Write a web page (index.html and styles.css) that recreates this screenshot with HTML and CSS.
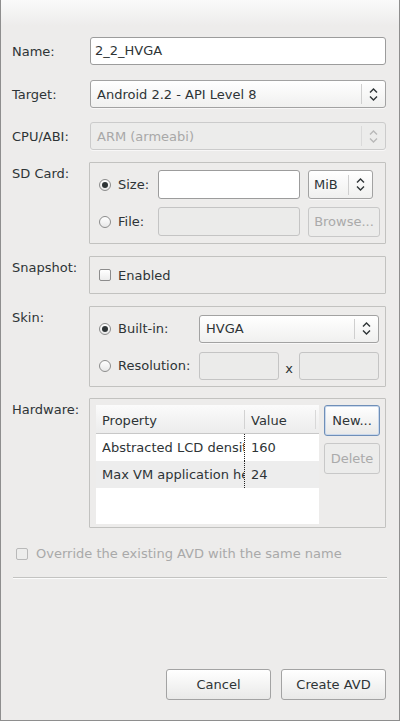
FILE: index.html
```html
<!DOCTYPE html>
<html>
<head>
<meta charset="utf-8">
<link rel="stylesheet" href="styles.css">
</head>
<body>
<div class="window">
  <div class="row field">
    <div class="lbl">Name:</div>
    <div class="input wide">2_2_HVGA</div>
  </div>
  <div class="row field r-target">
    <div class="lbl">Target:</div>
    <div class="select wide">
      <span class="sel-text">Android 2.2 - API Level 8</span>
      <span class="arrow"><svg width="9" height="15" viewBox="0 0 9 15"><path d="M1 5.5 L4.5 2 L8 5.5 M1 9.5 L4.5 13 L8 9.5" fill="none" stroke="#2e3436" stroke-width="1.4"/></svg></span>
    </div>
  </div>
  <div class="row field r-cpu">
    <div class="lbl">CPU/ABI:</div>
    <div class="select wide disabled">
      <span class="sel-text">ARM (armeabi)</span>
      <span class="arrow"><svg width="9" height="15" viewBox="0 0 9 15"><path d="M1 5.5 L4.5 2 L8 5.5 M1 9.5 L4.5 13 L8 9.5" fill="none" stroke="#b8b8b8" stroke-width="1.4"/></svg></span>
    </div>
  </div>
  <div class="row grouprow r-sd">
    <div class="lbl">SD Card:</div>
    <div class="group sd">
      <div class="grow">
        <div class="opt w-sd"><span class="radio checked"></span><span>Size:</span></div>
        <div class="input size"></div>
        <div class="select mib">
          <span class="sel-text">MiB</span>
          <span class="arrow"><svg width="9" height="15" viewBox="0 0 9 15"><path d="M1 5.5 L4.5 2 L8 5.5 M1 9.5 L4.5 13 L8 9.5" fill="none" stroke="#2e3436" stroke-width="1.4"/></svg></span>
        </div>
      </div>
      <div class="grow">
        <div class="opt w-sd"><span class="radio"></span><span>File:</span></div>
        <div class="input size disabled"></div>
        <div class="button browse disabled">Browse...</div>
      </div>
    </div>
  </div>
  <div class="row grouprow r-snap">
    <div class="lbl">Snapshot:</div>
    <div class="group snap">
      <div class="opt"><span class="check"></span><span>Enabled</span></div>
    </div>
  </div>
  <div class="row grouprow r-skin">
    <div class="lbl">Skin:</div>
    <div class="group skin">
      <div class="grow">
        <div class="opt w-skin"><span class="radio checked"></span><span>Built-in:</span></div>
        <div class="select hvga">
          <span class="sel-text">HVGA</span>
          <span class="arrow"><svg width="9" height="15" viewBox="0 0 9 15"><path d="M1 5.5 L4.5 2 L8 5.5 M1 9.5 L4.5 13 L8 9.5" fill="none" stroke="#2e3436" stroke-width="1.4"/></svg></span>
        </div>
      </div>
      <div class="grow">
        <div class="opt w-skin"><span class="radio"></span><span>Resolution:</span></div>
        <div class="input res disabled"></div>
        <div class="times">x</div>
        <div class="input res disabled"></div>
      </div>
    </div>
  </div>
  <div class="row grouprow r-hw">
    <div class="lbl">Hardware:</div>
    <div class="group hw">
      <div class="table">
        <div class="thead">
          <div class="th c1">Property</div>
          <div class="th c2">Value</div>
          <div class="th c3"></div>
        </div>
        <div class="tr">
          <div class="td c1"><span class="clip">Abstracted LCD density</span></div>
          <div class="td c2">160</div>
        </div>
        <div class="tr alt">
          <div class="td c1"><span class="clip">Max VM application heap size</span></div>
          <div class="td c2">24</div>
        </div>
      </div>
      <div class="side">
        <div class="button hwbtn focused">New...</div>
        <div class="button hwbtn disabled">Delete</div>
      </div>
    </div>
  </div>
  <div class="override"><span class="check disabled"></span><span>Override the existing AVD with the same name</span></div>
  <div class="sep"></div>
  <div class="spacer"></div>
  <div class="footer">
    <div class="button fbtn">Cancel</div>
    <div class="button fbtn">Create AVD</div>
  </div>
</div>
</body>
</html>
```

FILE: styles.css
```css
* { box-sizing: border-box; }
html, body { margin: 0; padding: 0; }
body {
  font-family: "DejaVu Sans", sans-serif;
  font-size: 13px;
  color: #2e3436;
  background: #edeceb;
}
.window {
  width: 400px;
  height: 721px;
  display: flex;
  flex-direction: column;
  padding: 37px 13px 20px 11px;
  border-left: 1px solid #8e8e8e;
  border-right: 1px solid #8e8e8e;
  border-bottom: 1px solid #8e8e8e;
  background: linear-gradient(#fafafa 0px, #edeceb 26px, #edeceb 100%);
}
.row { display: flex; }
.field { align-items: center; height: 28px; }
.lbl { width: 77px; flex: none; line-height: 15px; }
.grouprow { align-items: flex-start; }
.grouprow .lbl { padding-top: 4px; }
.r-target { margin-top: 15px; }
.r-cpu { margin-top: 14px; }
.r-sd { margin-top: 12px; }
.r-snap { margin-top: 12px; }
.r-skin { margin-top: 12px; }
.r-hw { margin-top: 11px; }

.input {
  height: 28px;
  border: 1px solid #9c9c9c;
  border-radius: 3px;
  background: #fff;
  padding: 0 4px;
  line-height: 26px;
  white-space: nowrap;
}
.input.disabled { background: #ebebea; border-color: #c4c4c4; }
.wide { width: 296px; margin-left: 1px; }

.select {
  height: 28px;
  display: flex;
  align-items: center;
  border: 1px solid #a2a2a2;
  border-radius: 3px;
  background: linear-gradient(#ffffff, #f0f0ef);
  box-shadow: 0 1px 0 rgba(255,255,255,0.6);
}
.sel-text { flex: 1; padding-left: 6px; white-space: nowrap; overflow: hidden; }
.arrow {
  flex: none;
  width: 24px;
  height: 20px;
  border-left: 1px solid #cfcfcf;
  display: flex;
  align-items: center;
  justify-content: center;
}
.select.disabled { background: #ececeb; border-color: #cbcbcb; color: #a8a8a8; }
.select.disabled .arrow { border-left-color: #dadada; }

.group {
  width: 297px;
  border: 1px solid #c2c2c0;
  border-radius: 1px;
}
.sd, .skin {
  height: 82px;
  padding: 7px 0 0 9px;
  display: flex;
  flex-direction: column;
  gap: 8px;
}
.skin { height: 81px; }
.grow { display: flex; align-items: center; height: 29px; }
.opt { display: flex; align-items: center; gap: 7px; flex: none; line-height: 15px; }
.w-sd { width: 59px; }
.w-skin { width: 100px; }
.input.size { width: 142px; height: 29px; }
.mib { width: 65px; margin-left: 8px; height: 29px; }
.mib .sel-text { padding-left: 5px; }
.browse { width: 72px; height: 30px; margin-left: 8px; }
.hvga { width: 180px; }
.input.res { width: 80px; }
.times { width: 20px; text-align: center; padding-top: 6px; }

.radio {
  width: 12px; height: 12px;
  border-radius: 50%;
  border: 1px solid #8c8c8c;
  background: linear-gradient(#ffffff, #e8e8e8);
  display: flex; align-items: center; justify-content: center;
  flex: none;
}
.radio.checked::after {
  content: "";
  width: 6px; height: 6px;
  border-radius: 50%;
  background: #2e3436;
}
.check {
  width: 12px; height: 12px;
  border: 1px solid #8c8c8c;
  border-radius: 2px;
  background: linear-gradient(#ffffff, #ececec);
  flex: none;
}
.check.disabled { border-color: #b9b9b9; background: #ededec; }

.snap { height: 38px; padding-left: 9px; display: flex; align-items: center; }

.hw {
  height: 130px;
  padding: 6px 5px 3px 6px;
  display: flex;
  gap: 5px;
}
.table { width: 223px; height: 119px; background: #fff; overflow: hidden; }
.thead {
  display: flex;
  height: 29px;
  background: linear-gradient(#fbfbfb, #ececec);
  border-bottom: 1px solid #c8c8c8;
}
.th { line-height: 28px; padding: 2px 0 0 6px; }
.th.c1 { width: 149px; border-right: 1px solid #d2d2d2; margin: 5px 0 4px; padding-top: 0; line-height: 19px; padding-top: 0; }
.th.c2 { width: 71px; border-right: 1px solid #d8d8d8; margin: 5px 0 4px; line-height: 19px; }
.th.c3 { flex: 1; padding: 0; }
.th.c1, .th.c2 { padding-top: 2px; line-height: 17px; }
.tr { display: flex; height: 27px; }
.tr.alt { background: #ededed; }
.td { line-height: 28px; padding-left: 6px; white-space: nowrap; overflow: hidden; }
.td.c1 { width: 149px; border-right: 1px dotted #222; padding-right: 0; }
.clip { display: block; width: 142px; overflow: hidden; }
.td.c2 { flex: 1; }
.side { display: flex; flex-direction: column; gap: 7px; }

.button {
  display: flex;
  align-items: center;
  justify-content: center;
  border: 1px solid #a3a3a3;
  border-radius: 3px;
  background: linear-gradient(#ffffff, #e9e9e8);
  white-space: nowrap;
}
.button.disabled { color: #aaaaaa; border-color: #c8c8c8; background: #ececeb; }
.button.focused { border-color: #6f8fb8; box-shadow: inset 0 0 0 1px #c9d8ec; }
.hwbtn { width: 56px; height: 31px; }

.override {
  margin-top: 18px;
  padding-left: 4px;
  display: flex;
  align-items: center;
  gap: 8px;
  line-height: 15px;
  color: #a9a9a9;
}
.sep {
  margin: 16px 0 0 1px;
  width: 374px;
  height: 1px;
  background: #c3c3c1;
  box-shadow: 0 1px 0 #fbfbfb;
}
.spacer { flex: 1; }
.footer { display: flex; justify-content: flex-end; gap: 10px; }
.fbtn { width: 105px; height: 31px; }
```
